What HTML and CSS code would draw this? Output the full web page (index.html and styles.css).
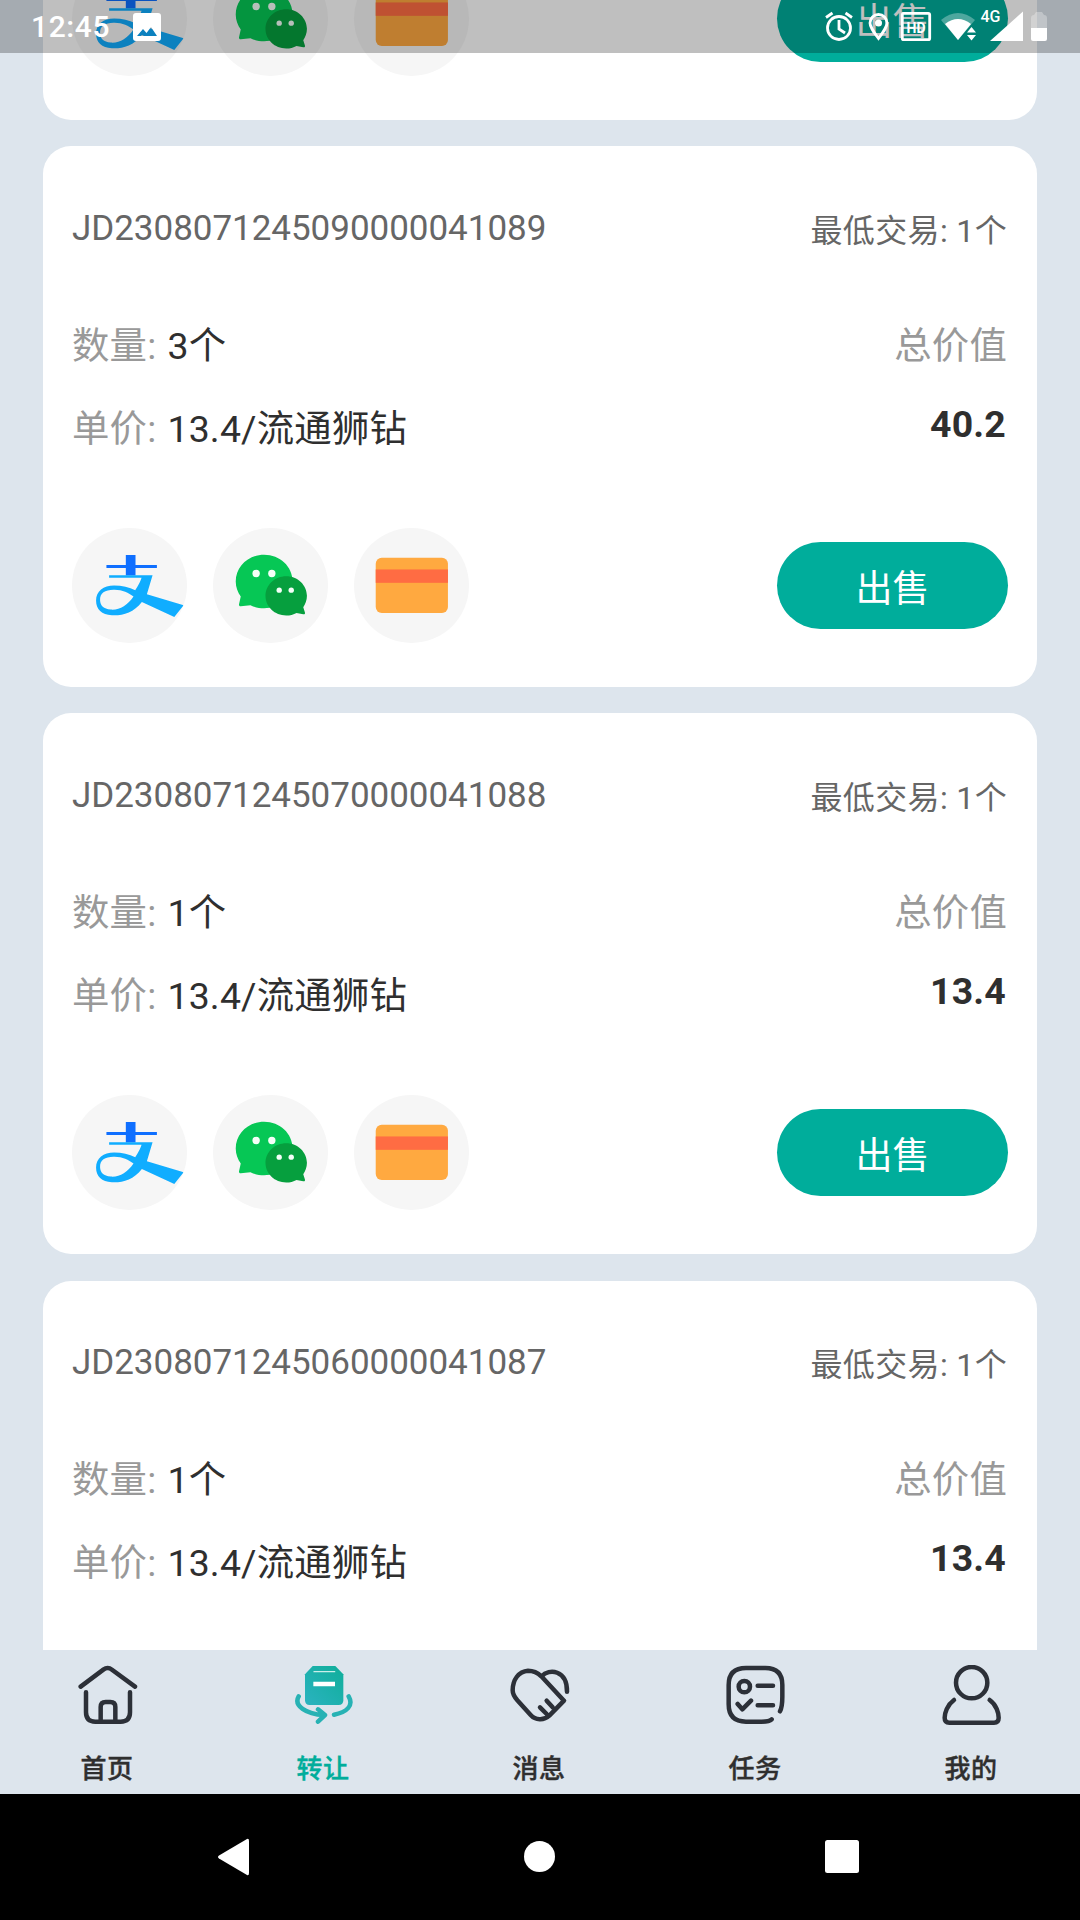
FILE: index.html
```html
<!DOCTYPE html>
<html lang="zh-CN">
<head>
  <meta charset="UTF-8">
  <meta name="viewport" content="width=device-width, initial-scale=1.0">
  <title>转让</title>
  <link rel="stylesheet" href="styles.css">
</head>
<body>

  <!-- icônes de paiement -->
  <svg class="defs">
    <symbol id="alipay" viewBox="0 0 344 344">
      <g transform="translate(-96 -86)">
        <path fill="#0f6fff" d="M257 167h29v30h64v9h-64v22h-29v-22h-58v-9h58z"/>
        <path fill="#10adff" fill-rule="evenodd" d="M207 227H337L320 284L430 317L402 352L305 307C280 340 245 349 215 347C185 345 168 330 168 303C168 275 190 258 222 258C245 258 268 264 285 272Q300 250 304 235H207ZM180 303C181 318 190 328 212 330C238 332 262 318 280 291C265 280 245 270 220 271C195 272 179 280 180 303Z"/>
      </g>
    </symbol>
    <symbol id="wechat" viewBox="0 0 344 344">
      <g transform="translate(-520 -86)">
        <path fill="#06c755" d="M673 166c47 0 85 35 85 80s-38 80-85 80c-15 0-29-3-41-9l-29 3c-5 0-6-3-5-7l5-22c-9-13-15-28-15-45c0-45 38-80 85-80z"/>
        <path fill="#069f3e" d="M739 230c34 0 62 26 62 59c0 13-5 25-11 34l5 16c1 4-1 6-5 5l-20-4c-9 5-20 8-31 8c-34 0-62-26-62-59s28-59 62-59z"/>
        <g fill="#f4fff8">
          <circle cx="649" cy="222" r="11"/>
          <circle cx="696" cy="222" r="11"/>
          <circle cx="718" cy="272" r="8"/>
          <circle cx="754" cy="272" r="8"/>
        </g>
      </g>
    </symbol>
    <symbol id="bank" viewBox="0 0 344 344">
      <g transform="translate(-942 -86)">
        <rect x="1007" y="175" width="216" height="165" rx="18" fill="#ffa940"/>
        <rect x="1007" y="210" width="216" height="40" fill="#ff6c43"/>
      </g>
    </symbol>
  </svg>

  <div class="status">
    <div class="status-left">
      <span class="time">12:45</span>
      <svg class="photo" viewBox="0 0 28 28">
        <path fill="#fff" fill-rule="evenodd" d="M3 0H25Q28 0 28 3V25Q28 28 25 28H3Q0 28 0 25V3Q0 0 3 0ZM4 23H24L18 14L13.5 20L10 16Z"/>
      </svg>
    </div>
    <svg class="status-icons" viewBox="820 0 240 53">
      <g fill="none" stroke="#fff" stroke-width="2.8">
        <circle cx="839" cy="28" r="11.5"/>
        <path d="M839 20v9l6 4M826 17.500l6.500-4.500M852 17.500l-6.500-4.500"/>
        <rect x="902.3" y="13.3" width="27.4" height="26.4" rx="1.5"/>
        <path d="M878.500 38.500C873 31 870 27 870 23a8.500 8.500 0 0 1 17 0C887 27 884 31 878.500 38.500Z"/>
      </g>
      <circle cx="878.500" cy="23" r="3.500" fill="#fff"/>
      <text class="hd" x="916" y="32.500" text-anchor="middle">HD</text>
      <path fill="#fff" opacity=".3" d="M941 20Q958 6 975 20L958 40Z"/>
      <path fill="#fff" d="M945 24Q958 14 971 24L958 40Z"/>
      <path fill="#fff" d="M967 32.500l4.500-5.500 4.500 5.500zM967 35l4.500 5.500 4.500-5.500z"/>
      <text class="net" x="980.500" y="22">4G</text>
      <path fill="#fff" d="M1023 11.500V41H990Z"/>
      <path fill="#fff" opacity=".3" d="M1031 28V18Q1031 15 1034 15L1036 12H1042L1044 15Q1047 15 1047 18V28Z"/>
      <path fill="#fff" d="M1031 28H1047V39Q1047 41 1045 41H1033Q1031 41 1031 39Z"/>
    </svg>
  </div>

  <main class="page">
    <div class="list">

      <div class="card">
        <div class="head"><span class="order">JD2308071245100000041090</span><span class="min">最低交易: 1个</span></div>
        <div class="row"><p><span class="label">数量: </span>1个</p><span class="label">总价值</span></div>
        <div class="row"><p><span class="label">单价: </span>13.4/流通狮钻</p><strong>13.4</strong></div>
        <div class="foot">
          <svg class="pay"><use href="#alipay"/></svg>
          <svg class="pay"><use href="#wechat"/></svg>
          <svg class="pay"><use href="#bank"/></svg>
          <button class="sell">出售</button>
        </div>
      </div>

      <div class="card">
        <div class="head"><span class="order">JD2308071245090000041089</span><span class="min">最低交易: 1个</span></div>
        <div class="row"><p><span class="label">数量: </span>3个</p><span class="label">总价值</span></div>
        <div class="row"><p><span class="label">单价: </span>13.4/流通狮钻</p><strong>40.2</strong></div>
        <div class="foot">
          <svg class="pay"><use href="#alipay"/></svg>
          <svg class="pay"><use href="#wechat"/></svg>
          <svg class="pay"><use href="#bank"/></svg>
          <button class="sell">出售</button>
        </div>
      </div>

      <div class="card">
        <div class="head"><span class="order">JD2308071245070000041088</span><span class="min">最低交易: 1个</span></div>
        <div class="row"><p><span class="label">数量: </span>1个</p><span class="label">总价值</span></div>
        <div class="row"><p><span class="label">单价: </span>13.4/流通狮钻</p><strong>13.4</strong></div>
        <div class="foot">
          <svg class="pay"><use href="#alipay"/></svg>
          <svg class="pay"><use href="#wechat"/></svg>
          <svg class="pay"><use href="#bank"/></svg>
          <button class="sell">出售</button>
        </div>
      </div>

      <div class="card">
        <div class="head"><span class="order">JD2308071245060000041087</span><span class="min">最低交易: 1个</span></div>
        <div class="row"><p><span class="label">数量: </span>1个</p><span class="label">总价值</span></div>
        <div class="row"><p><span class="label">单价: </span>13.4/流通狮钻</p><strong>13.4</strong></div>
      </div>

    </div>
  </main>

  <nav class="tabs">
    <a class="tab">
      <svg viewBox="0 0 180 180">
        <path d="M8 65L76 14Q89 4 102 14L171 65M24 82V142Q24 170 52 170H128Q156 170 156 142V82M68 170V126Q68 111 83 111H97Q112 111 112 126V170"/>
      </svg>
      <span>首页</span>
    </a>
    <a class="tab active">
      <svg viewBox="0 0 180 180">
        <defs>
          <linearGradient id="teal" x1="0" y1="1" x2="1" y2="0">
            <stop offset="0" stop-color="#2bb3c0"/>
            <stop offset="1" stop-color="#0fae9a"/>
          </linearGradient>
        </defs>
        <path class="box" d="M56 3H124L148 28V106Q148 120 134 120H47Q33 120 33 106V28Z"/>
        <path class="lid" d="M60 20H122"/>
        <path class="slot" d="M58 57H123"/>
        <path class="arc" d="M14 94C-2 122 36 147 90 150M72 133L93 150L72 170M164 94C180 122 158 142 120 149"/>
      </svg>
      <span>转让</span>
    </a>
    <a class="tab">
      <svg viewBox="0 0 180 180">
        <path d="M162 107L94 34C80 20 66 17 54 17C26 19 8 44 8 76C8 88 14 97 22 106L62 150C76 166 102 167 118 152L162 107M95 34C117 9 172 15 171 80M110 107L128 127M90 127L110 147"/>
      </svg>
      <span>消息</span>
    </a>
    <a class="tab">
      <svg viewBox="0 0 180 180">
        <path d="M162 139Q169 125 169 95V60Q169 9 118 9H60Q8 9 8 60V118Q8 170 60 170H108Q130 170 137 163M95 62H141M95 121H141M35 117L49 133L75 107"/>
        <circle cx="55" cy="65" r="17"/>
      </svg>
      <span>任务</span>
    </a>
    <a class="tab">
      <svg viewBox="0 0 180 180">
        <circle cx="89" cy="53" r="47"/>
        <path d="M36 105C15 120 8 145 8 158Q8 173 22 173H156Q170 173 170 158C170 145 164 120 143 105"/>
      </svg>
      <span>我的</span>
    </a>
  </nav>

  <div class="sysnav">
    <svg viewBox="0 0 34 38"><path d="M3 17.500L31 1Q33 0 33 3V35Q33 38 31 37L3 20.500Q1 19 3 17.500Z"/></svg>
    <svg viewBox="0 0 34 38"><circle cx="18.500" cy="18.500" r="15.500"/></svg>
    <svg viewBox="0 0 34 38"><rect x="0" y="2" width="34" height="33" rx="2.500"/></svg>
  </div>

</body>
</html>
```

FILE: styles.css
```css
* {
  box-sizing: border-box;
}

body {
  margin: 0;
  height: 1920px;
  display: flex;
  flex-direction: column;
  overflow: hidden;
  background: #dde5ed;
  color: #2f2f2f;
  font-family: Roboto, "Noto Sans CJK SC", sans-serif;
}

.defs {
  display: none;
}

/* barre de statut par-dessus la liste */
.status {
  position: absolute;
  top: 0;
  left: 0;
  z-index: 2;
  width: 100%;
  height: 53px;
  padding: 0 20px 0 31px;
  display: flex;
  align-items: center;
  justify-content: space-between;
  background: rgba(0, 0, 0, 0.25);
  color: #fff;
}

.status-left {
  display: flex;
  align-items: center;
  gap: 23px;
}

.time {
  font-size: 30px;
  font-weight: 500;
  letter-spacing: 0.6px;
}

.photo {
  width: 28px;
  height: 28px;
}

.status-icons {
  width: 240px;
  height: 53px;
}

.hd {
  fill: #fff;
  font-size: 14px;
  font-weight: 700;
}

.net {
  fill: #fff;
  font-size: 16px;
  font-weight: 500;
}

.page {
  height: 1650px;
  overflow: hidden;
}

.list {
  margin-top: -421px;
  padding: 0 43px;
  display: flex;
  flex-direction: column;
  gap: 26.2px;
}

.card {
  height: 541px;
  padding: 52px 29px 0;
  background: #fff;
  border-radius: 28px;
}

.head {
  height: 60px;
  margin-bottom: 43px;
  display: flex;
  align-items: center;
  justify-content: space-between;
  color: #666;
}

.order {
  font-size: 35px;
  letter-spacing: -0.03px;
}

.min {
  padding: 0 1px 1px 0;
  font-size: 32px;
  letter-spacing: 0.35px;
}

.row {
  height: 83px;
  padding-right: 1px;
  display: flex;
  align-items: center;
  justify-content: space-between;
  font-size: 37.4px;
  letter-spacing: 0.2px;
}

.row p {
  margin: 0;
}

.row strong {
  padding: 0 1px 4px 0;
}

.label {
  color: #999;
}

p .label {
  margin-right: 1.5px;
}

.foot {
  margin-top: 61px;
  display: flex;
  align-items: center;
  gap: 26px;
}

.pay {
  width: 115px;
  height: 115px;
  border-radius: 50%;
  background: #f6f6f6;
}

.sell {
  width: 231px;
  height: 87px;
  margin-left: auto;
  padding: 1px 0 0;
  border: none;
  border-radius: 44px;
  background: #00ad9b;
  color: #fff;
  font-family: inherit;
  font-size: 37px;
}

.tabs {
  height: 144px;
  display: flex;
  background: #dde5ed;
}

.tab {
  flex: 1;
  padding-top: 15px;
  display: flex;
  flex-direction: column;
  align-items: center;
  gap: 25px;
  font-size: 26px;
  font-weight: 500;
  line-height: 38px;
}

.tab span {
  padding-right: 2px;
  letter-spacing: 0.4px;
  -webkit-text-stroke: 0.4px;
}

.tab svg {
  width: 60px;
  height: 60px;
  fill: none;
  stroke: #2c3038;
  stroke-width: 13.5;
  stroke-linecap: round;
  stroke-linejoin: round;
}

.active {
  color: #00ad9b;
}

.active .box {
  fill: url(#teal);
  stroke: none;
}

.active .lid {
  stroke: #c9eeea;
  stroke-width: 4;
}

.active .slot {
  stroke: #fff;
  stroke-linecap: butt;
}

.active .arc {
  stroke: #27b2b4;
}

.sysnav {
  height: 126px;
  padding: 0 221px 0 216px;
  display: flex;
  align-items: center;
  justify-content: space-between;
  background: #000;
}

.sysnav svg {
  width: 34px;
  height: 38px;
  fill: #fff;
}
```
